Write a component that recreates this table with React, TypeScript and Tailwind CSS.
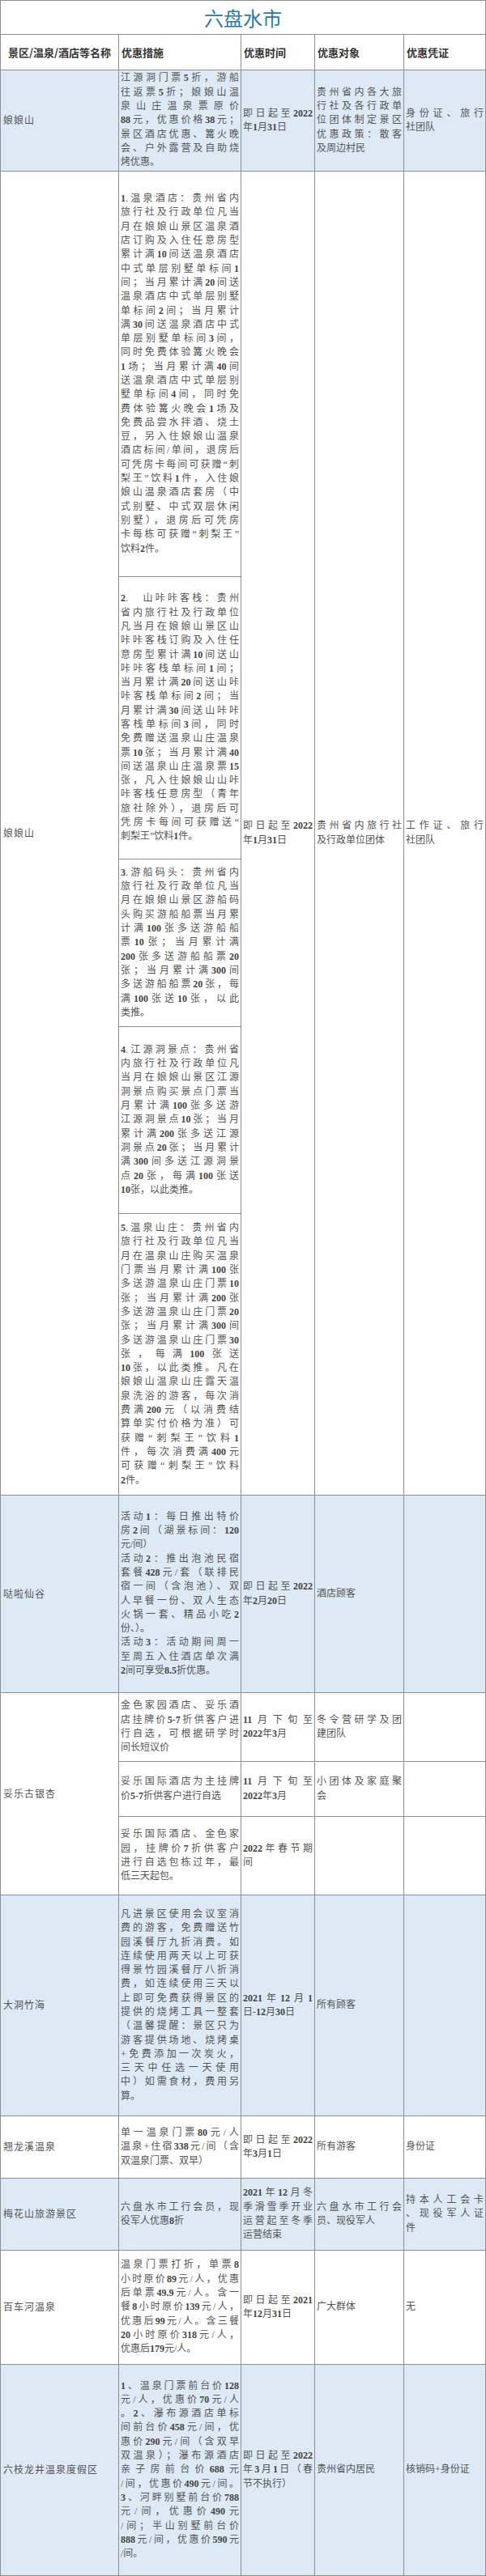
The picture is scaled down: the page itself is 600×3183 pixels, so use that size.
import React from 'react';

const LINE = 'border-r border-b border-[#8f8f8f]';
const BLUE = 'bg-[#dde9f5]';
const BODY = "font-['Liberation_Serif','Noto_Sans_CJK_SC',serif] text-[12px] text-[#555]";

// digits in the original are set in a heavier latin face
function Rich({ text }: { text: string }) {
  const parts = text.split(/(\d+(?:\.\d+)?)/);
  return (
    <>
      {parts.map((p, i) =>
        /^\d/.test(p) ? (
          <span key={i} className="font-bold text-[#444]">
            {p}
          </span>
        ) : (
          <React.Fragment key={i}>{p}</React.Fragment>
        )
      )}
    </>
  );
}

function Lines({ paras }: { paras: string[][] }) {
  return (
    <div className="leading-[17.3px]">
      {paras.map((p, i) => (
        <div key={i}>
          {p.map((line, j) => (
            <div
              key={j}
              className={j < p.length - 1 ? 'text-justify [text-align-last:justify]' : 'text-left'}
            >
              <Rich text={line} />
            </div>
          ))}
        </div>
      ))}
    </div>
  );
}

function Cell({
  lines,
  paras,
  blue,
  className = '',
}: {
  lines?: string[];
  paras?: string[][];
  blue?: boolean;
  className?: string;
}) {
  const p = paras ?? (lines && lines.length ? [lines] : []);
  return (
    <div className={`${LINE} ${blue ? BLUE : 'bg-white'} ${BODY} flex flex-col justify-center px-[2px] ${className}`}>
      {p.length > 0 && <Lines paras={p} />}
    </div>
  );
}

function Name({ name, blue, className = '' }: { name: string; blue?: boolean; className?: string }) {
  return (
    <div
      className={`${LINE} ${blue ? BLUE : 'bg-white'} ${BODY} flex items-center px-[3px] tracking-[1px] ${className}`}
    >
      {name}
    </div>
  );
}

function Head({ label, center }: { label: string; center?: boolean }) {
  return (
    <div
      className={`${LINE} bg-white flex items-center px-[3px] font-['Noto_Sans_CJK_SC',sans-serif] text-[13px] font-bold text-[#333] ${center ? 'justify-center' : ''}`}
    >
      {label}
    </div>
  );
}

const lnsDate2022 = ['即日起至2022', '年1月31日'];

export default function App() {
  return (
    <div className="w-[600px] bg-white">
      <div className="grid w-[600px] grid-cols-[146px_151px_91px_110px_101px] grid-rows-[42px_44px_125px_501px_349px_207px_231px_348px_244px_85px_68px_97px_273px_77px_89px_141px_261px] border-l border-t border-[#8f8f8f]">
        {/* Title */}
        <div className={`${LINE} col-span-5 bg-white flex items-center justify-center font-['Noto_Sans_CJK_SC',sans-serif] text-[24px] text-[#2b7aa6]`}>
          六盘水市
        </div>

        {/* Header */}
        <Head label="景区/温泉/酒店等名称" center />
        <Head label="优惠措施" />
        <Head label="优惠时间" />
        <Head label="优惠对象" />
        <Head label="优惠凭证" />

        {/* 娘娘山 1 */}
        <Name name="娘娘山" blue />
        <Cell
          blue
          lines={[
            '江源洞门票5折，游船',
            '往返票5折；娘娘山温',
            '泉山庄温泉票原价',
            '88元，优惠价格38元；',
            '景区酒店优惠、篝火晚',
            '会、户外露营及自助烧',
            '烤优惠。',
          ]}
        />
        <Cell blue lines={lnsDate2022} />
        <Cell blue lines={['贵州省内各大旅', '行社及各行政单', '位团体制定景区', '优惠政策：散客', '及周边村民']} />
        <Cell blue lines={['身份证、旅行', '社团队']} />

        {/* 娘娘山 2 */}
        <Name name="娘娘山" className="row-span-5" />
        <Cell
          lines={[
            '1.温泉酒店：贵州省内',
            '旅行社及行政单位凡当',
            '月在娘娘山景区温泉酒',
            '店订购及入住任意房型',
            '累计满10间送温泉酒店',
            '中式单层别墅单标间1',
            '间；当月累计满20间送',
            '温泉酒店中式单层别墅',
            '单标间2间；当月累计',
            '满30间送温泉酒店中式',
            '单层别墅单标间3间，',
            '同时免费体验篝火晚会',
            '1场；当月累计满40间',
            '送温泉酒店中式单层别',
            '墅单标间4间，同时免',
            '费体验篝火晚会1场及',
            '免费品尝水拌酒、烧土',
            '豆，另入住娘娘山温泉',
            '酒店标间/单间，退房后',
            '可凭房卡每间可获赠“刺',
            '梨王”饮料1件，入住娘',
            '娘山温泉酒店套房（中',
            '式别墅、中式双层休闲',
            '别墅），退房后可凭房',
            '卡每栋可获赠“刺梨王”',
            '饮料2件。',
          ]}
        />
        <Cell className="row-span-5" lines={lnsDate2022} />
        <Cell className="row-span-5" lines={['贵州省内旅行社', '及行政单位团体']} />
        <Cell className="row-span-5" lines={['工作证、旅行', '社团队']} />
        <Cell
          lines={[
            '2.\u3000山咔咔客栈：贵州',
            '省内旅行社及行政单位',
            '凡当月在娘娘山景区山',
            '咔咔客栈订购及入住任',
            '意房型累计满10间送山',
            '咔咔客栈单标间1间；',
            '当月累计满20间送山咔',
            '咔客栈单标间2间；当',
            '月累计满30间送山咔咔',
            '客栈单标间3间，同时',
            '免费赠送温泉山庄温泉',
            '票10张；当月累计满40',
            '间送温泉山庄温泉票15',
            '张，凡入住娘娘山山咔',
            '咔客栈任意房型（青年',
            '旅社除外），退房后可',
            '凭房卡每间可获赠送“',
            '刺梨王”饮料1件。',
          ]}
        />
        <Cell
          lines={[
            '3.游船码头：贵州省内',
            '旅行社及行政单位凡当',
            '月在娘娘山景区游船码',
            '头购买游船船票当月累',
            '计满100张多送游船船',
            '票10张；当月累计满',
            '200张多送游船船票20',
            '张；当月累计满300间',
            '多送游船船票20张，每',
            '满100张送10张，以此',
            '类推。',
          ]}
        />
        <Cell
          lines={[
            '4.江源洞景点：贵州省',
            '内旅行社及行政单位凡',
            '当月在娘娘山景区江源',
            '洞景点购买景点门票当',
            '月累计满100张多送游',
            '江源洞景点10张；当月',
            '累计满200张多送江源',
            '洞景点20张；当月累计',
            '满300间多送江源洞景',
            '点20张，每满100张送',
            '10张，以此类推。',
          ]}
        />
        <Cell
          lines={[
            '5.温泉山庄：贵州省内',
            '旅行社及行政单位凡当',
            '月在温泉山庄购买温泉',
            '门票当月累计满100张',
            '多送游温泉山庄门票10',
            '张；当月累计满200张',
            '多送游温泉山庄门票20',
            '张；当月累计满300间',
            '多送游温泉山庄门票30',
            '张，每满100张送',
            '10张，以此类推。凡在',
            '娘娘山温泉山庄露天温',
            '泉洗浴的游客，每次消',
            '费满200元（以消费结',
            '算单实付价格为准）可',
            '获赠“刺梨王”饮料1',
            '件，每次消费满400元',
            '可获赠“刺梨王”饮料',
            '2件。',
          ]}
        />

        {/* 哒啦仙谷 */}
        <Name name="哒啦仙谷" blue />
        <Cell
          blue
          paras={[
            ['活动1：每日推出特价', '房2间（湖景标间：120', '元/间）'],
            [
              '活动2：推出泡池民宿',
              '套餐428元/套（联排民',
              '宿一间（含泡池）、双',
              '人早餐一份、双人生态',
              '火锅一套、精品小吃2',
              '份、）。',
            ],
            ['活动3：活动期间周一', '至周五入住酒店单次满', '2间可享受8.5折优惠。'],
          ]}
        />
        <Cell blue lines={['即日起至2022', '年2月20日']} />
        <Cell blue lines={['酒店顾客']} />
        <Cell blue />

        {/* 妥乐古银杏 */}
        <Name name="妥乐古银杏" className="row-span-3" />
        <Cell lines={['金色家园酒店、妥乐酒', '店挂牌价5-7折供客户进', '行自选，可根据研学时', '间长短议价']} />
        <Cell lines={['11月下旬至', '2022年3月']} />
        <Cell lines={['冬令营研学及团', '建团队']} />
        <Cell />
        <Cell lines={['妥乐国际酒店为主挂牌', '价5-7折供客户进行自选']} />
        <Cell lines={['11月下旬至', '2022年3月']} />
        <Cell lines={['小团体及家庭聚', '会']} />
        <Cell />
        <Cell lines={['妥乐国际酒店、金色家', '园，挂牌价7折供客户', '进行自选包栋过年，最', '低三天起包。']} />
        <Cell lines={['2022年春节期', '间']} />
        <Cell />
        <Cell />

        {/* 大洞竹海 */}
        <Name name="大洞竹海" blue />
        <Cell
          blue
          lines={[
            '凡进景区使用会议室消',
            '费的游客，免费赠送竹',
            '园溪餐厅九折消费。如',
            '连续使用两天以上可获',
            '得景竹园溪餐厅八折消',
            '费，如连续使用三天以',
            '上即可免费获得景区的',
            '提供的烧烤工具一整套',
            '（温馨提醒：景区只为',
            '游客提供场地、烧烤桌',
            '+免费添加一次炭火，',
            '三天中任选一天使用',
            '中）如需食材，费用另',
            '算。',
          ]}
        />
        <Cell blue lines={['2021年12月1', '日-12月30日']} />
        <Cell blue lines={['所有顾客']} />
        <Cell blue />

        {/* 翘龙溪温泉 */}
        <Name name="翘龙溪温泉" />
        <Cell lines={['单一温泉门票80元/人', '温泉+住宿338元/间（含', '双温泉门票、双早）']} />
        <Cell lines={['即日起至2022', '年3月1日']} />
        <Cell lines={['所有游客']} />
        <Cell lines={['身份证']} />

        {/* 梅花山旅游景区 */}
        <Name name="梅花山旅游景区" blue />
        <Cell blue lines={['六盘水市工行会员，现', '役军人优惠8折']} />
        <Cell blue lines={['2021年12月冬', '季滑雪季开业', '运营起至冬季', '运营结束']} />
        <Cell blue lines={['六盘水市工行会', '员、现役军人']} />
        <Cell blue lines={['持本人工会卡', '、现役军人证', '件']} />

        {/* 百车河温泉 */}
        <Name name="百车河温泉" />
        <Cell
          lines={[
            '温泉门票打折，单票8',
            '小时原价89元/人，优惠',
            '后单票49.9元/人。含一',
            '餐8小时原价139元/人，',
            '优惠后99元/人。含三餐',
            '20小时原价318元/人，',
            '优惠后179元/人。',
          ]}
        />
        <Cell lines={['即日起至2021', '年12月31日']} />
        <Cell lines={['广大群体']} />
        <Cell lines={['无']} />

        {/* 六枝龙井温泉度假区 */}
        <Name name="六枝龙井温泉度假区" blue />
        <Cell
          blue
          lines={[
            '1、温泉门票前台价128',
            '元/人，优惠价70元/人',
            '。2、瀑布源酒店单标',
            '间前台价458元/间，优',
            '惠价290元/间（含双早',
            '双温泉）；瀑布源酒店',
            '亲子房前台价688元',
            '/间，优惠价490元/间。',
            '3、河畔别墅前台价788',
            '元/间，优惠价490元',
            '/间；半山别墅前台价',
            '888元/间，优惠价590元',
            '/间。',
          ]}
        />
        <Cell blue lines={['即日起至2022', '年3月1日（春', '节不执行）']} />
        <Cell blue lines={['贵州省内居民']} />
        <Cell blue lines={['核销码+身份证']} />
      </div>
    </div>
  );
}
